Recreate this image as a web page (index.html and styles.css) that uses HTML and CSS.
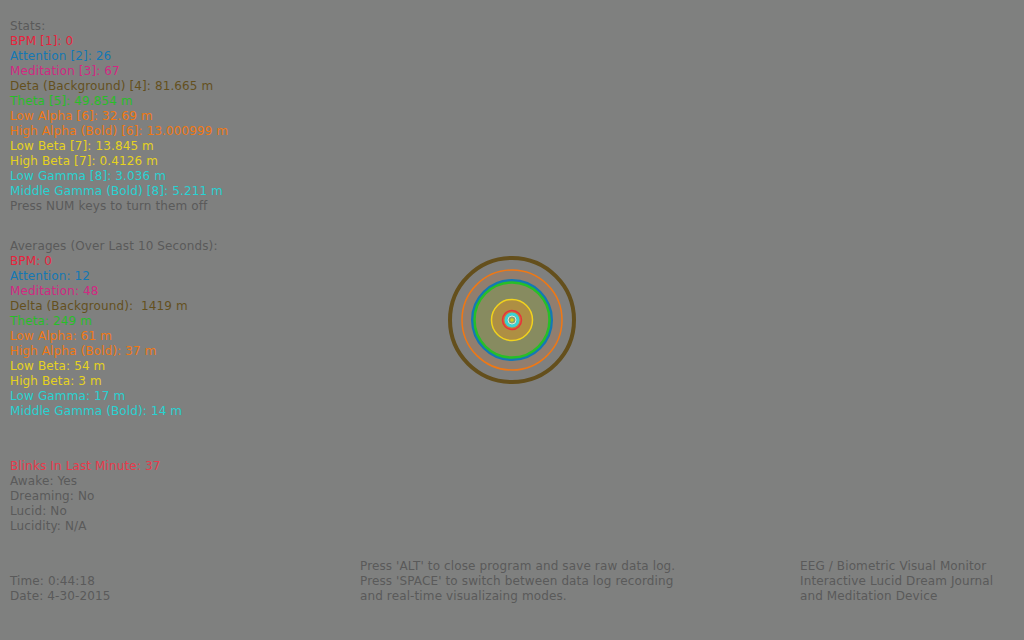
FILE: index.html
```html
<!DOCTYPE html>
<html lang="en">
<head>
  <meta charset="UTF-8">
  <title>EEG / Biometric Visual Monitor</title>
  <link rel="stylesheet" href="styles.css">
</head>
<body>
  <div id="monitor">
    <!-- Live stats -->
    <div class="block">
      <div class="muted">Stats:</div>
      <div class="red">BPM [1]: 0</div>
      <div class="blue">Attention [2]: 26</div>
      <div class="magenta">Meditation [3]: 67</div>
      <div class="brown">Deta (Background) [4]: 81.665 m</div>
      <div class="green">Theta [5]: 49.854 m</div>
      <div class="orange">Low Alpha [6]: 32.69 m</div>
      <div class="orange">High Alpha (Bold) [6]: 13.000999 m</div>
      <div class="yellow">Low Beta [7]: 13.845 m</div>
      <div class="yellow">High Beta [7]: 0.4126 m</div>
      <div class="cyan">Low Gamma [8]: 3.036 m</div>
      <div class="cyan">Middle Gamma (Bold) [8]: 5.211 m</div>
      <div class="muted">Press NUM keys to turn them off</div>
    </div>

    <!-- Averages -->
    <div class="block averages">
      <div class="muted">Averages (Over Last 10 Seconds):</div>
      <div class="red">BPM: 0</div>
      <div class="blue">Attention: 12</div>
      <div class="magenta">Meditation: 48</div>
      <div class="brown">Delta (Background):&nbsp; 1419 m</div>
      <div class="green">Theta: 249 m</div>
      <div class="orange">Low Alpha: 61 m</div>
      <div class="orange">High Alpha (Bold): 37 m</div>
      <div class="yellow">Low Beta: 54 m</div>
      <div class="yellow">High Beta: 3 m</div>
      <div class="cyan">Low Gamma: 17 m</div>
      <div class="cyan">Middle Gamma (Bold): 14 m</div>
    </div>

    <!-- Sleep state -->
    <div class="block state">
      <div class="blink">Blinks In Last Minute: 37</div>
      <div class="muted">Awake: Yes</div>
      <div class="muted">Dreaming: No</div>
      <div class="muted">Lucid: No</div>
      <div class="muted">Lucidity: N/A</div>
    </div>

    <div id="footer">
      <div class="col">
        <div>&nbsp;</div>
        <div>Time: 0:44:18</div>
        <div>Date: 4-30-2015</div>
      </div>
      <div class="col">
        <div>Press 'ALT' to close program and save raw data log.</div>
        <div>Press 'SPACE' to switch between data log recording</div>
        <div>and real-time visualizaing modes.</div>
      </div>
      <div class="col">
        <div>EEG / Biometric Visual Monitor</div>
        <div>Interactive Lucid Dream Journal</div>
        <div>and Meditation Device</div>
      </div>
    </div>

    <!-- Brainwave rings -->
    <svg id="rings" width="130" height="130" viewBox="-65 -65 130 130">
      <circle r="62" fill="none" stroke="#644f1c" stroke-width="4"/>
      <circle r="50" fill="rgba(240,120,30,0.16)" stroke="#f07814" stroke-width="1.5"/>
      <circle r="39.5" fill="rgba(90,210,20,0.16)" stroke="#1478b4" stroke-width="3"/>
      <circle r="37.5" fill="none" stroke="#28be28" stroke-width="2.5"/>
      <circle r="20.5" fill="rgba(240,150,20,0.38)" stroke="#f0d21e" stroke-width="1.5"/>
      <circle r="9.5" fill="#c87838" stroke="#e8323c" stroke-width="1.5"/>
      <circle r="7.5" fill="#3cd2d2"/>
      <circle r="4" fill="#8aa070" stroke="#e6e6d6" stroke-width="1"/>
      <circle r="1.8" fill="#d2d21e"/>
    </svg>
  </div>
</body>
</html>
```

FILE: styles.css
```css
body {
  margin: 0;
  background: #7f807f;
  font-family: 'DejaVu Sans', Verdana, sans-serif;
  font-size: 12px;
  letter-spacing: 0.12px;
  line-height: 15px;
  color: #5a5a5a;
}

#monitor {
  position: relative;
  height: 640px;
  box-sizing: border-box;
  padding: 19px 10px 0;
  display: flex;
  flex-direction: column;
}

.averages { margin-top: 25px; }
.state { margin-top: 40px; }

/* Colour per band */
.muted   { color: #5a5a5a; }
.red     { color: #e8233c; }
.blink   { color: #e83a4c; }
.blue    { color: #1478b4; }
.magenta { color: #d22882; }
.brown   { color: #64501e; }
.green   { color: #28be28; }
.orange  { color: #f07814; }
.yellow  { color: #e6d21e; }
.cyan    { color: #28d2d2; }

#footer {
  margin-top: 25px;
  display: grid;
  grid-template-columns: 350px 440px auto;
  color: #5a5a5a;
}

/* Rings sit over the canvas centre */
#rings {
  position: absolute;
  left: 447px;
  top: 255px;
}
```
